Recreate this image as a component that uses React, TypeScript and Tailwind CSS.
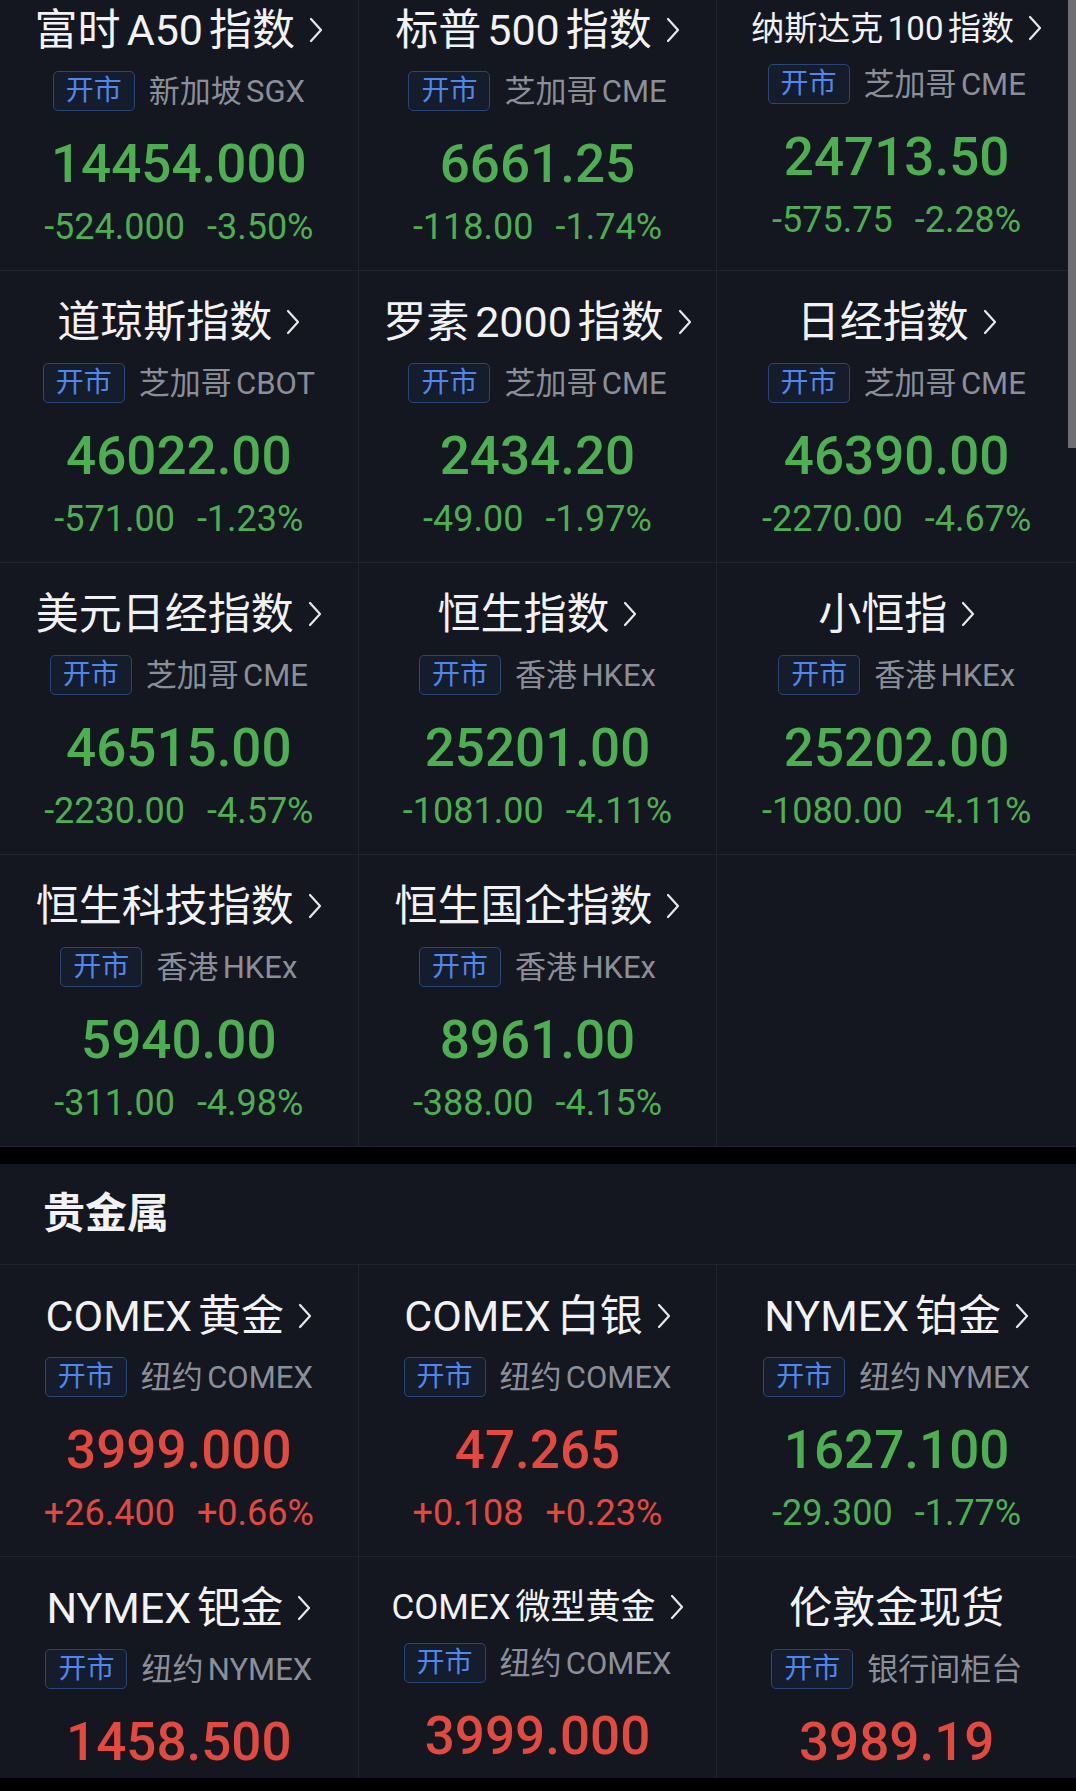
import React from "react";

type Item = {
  title: string;
  ex: string;
  price: string;
  chg?: string;
  pct?: string;
  up?: boolean;
  small?: number;
  noArrow?: boolean;
};

const FONT = { fontFamily: 'Roboto, "Noto Sans CJK SC", sans-serif' };

const indices: (Item | null)[] = [
  { title: "富时A50指数", ex: "新加坡SGX", price: "14454.000", chg: "-524.000", pct: "-3.50%" },
  { title: "标普500指数", ex: "芝加哥CME", price: "6661.25", chg: "-118.00", pct: "-1.74%" },
  { title: "纳斯达克100指数", ex: "芝加哥CME", price: "24713.50", chg: "-575.75", pct: "-2.28%", small: 1 },
  { title: "道琼斯指数", ex: "芝加哥CBOT", price: "46022.00", chg: "-571.00", pct: "-1.23%" },
  { title: "罗素2000指数", ex: "芝加哥CME", price: "2434.20", chg: "-49.00", pct: "-1.97%" },
  { title: "日经指数", ex: "芝加哥CME", price: "46390.00", chg: "-2270.00", pct: "-4.67%" },
  { title: "美元日经指数", ex: "芝加哥CME", price: "46515.00", chg: "-2230.00", pct: "-4.57%" },
  { title: "恒生指数", ex: "香港HKEx", price: "25201.00", chg: "-1081.00", pct: "-4.11%" },
  { title: "小恒指", ex: "香港HKEx", price: "25202.00", chg: "-1080.00", pct: "-4.11%" },
  { title: "恒生科技指数", ex: "香港HKEx", price: "5940.00", chg: "-311.00", pct: "-4.98%" },
  { title: "恒生国企指数", ex: "香港HKEx", price: "8961.00", chg: "-388.00", pct: "-4.15%" },
  null,
];

const metals: Item[] = [
  { title: "COMEX黄金", ex: "纽约COMEX", price: "3999.000", chg: "+26.400", pct: "+0.66%", up: true },
  { title: "COMEX白银", ex: "纽约COMEX", price: "47.265", chg: "+0.108", pct: "+0.23%", up: true },
  { title: "NYMEX铂金", ex: "纽约NYMEX", price: "1627.100", chg: "-29.300", pct: "-1.77%" },
  { title: "NYMEX钯金", ex: "纽约NYMEX", price: "1458.500", up: true },
  { title: "COMEX微型黄金", ex: "纽约COMEX", price: "3999.000", up: true, small: 2 },
  { title: "伦敦金现货", ex: "银行间柜台", price: "3989.19", up: true, noArrow: true },
];

const CJK = /[\u3400-\u9fff]/;

function Spaced({ text }: { text: string }) {
  const runs: { s: string; cjk: boolean }[] = [];
  for (const ch of text) {
    const c = CJK.test(ch);
    const last = runs[runs.length - 1];
    if (last && last.cjk === c) last.s += ch;
    else runs.push({ s: ch, cjk: c });
  }
  return (
    <span className="inline-flex items-center">
      {runs.map((r, i) => (
        <span key={i} className={i > 0 ? "ml-[0.14em]" : ""}>
          {r.s}
        </span>
      ))}
    </span>
  );
}

function Chevron() {
  return (
    <svg width="15" height="28" viewBox="0 0 15 28" className="ml-[13px] shrink-0">
      <polyline points="3,3 13,14 3,25" fill="none" stroke="#e8e8ea" strokeWidth="2.2" strokeLinecap="round" strokeLinejoin="round" />
    </svg>
  );
}

function Cell({ item, col }: { item: Item | null; col: number }) {
  const border = col < 2 ? "border-r border-b border-[#20242d]" : "border-b border-[#20242d]";
  if (!item) return <div className={`h-[292px] ${border}`} />;
  const color = item.up ? "text-[#e2493f]" : "text-[#4daf52]";
  const titleCls =
    item.small === 1
      ? "h-[40px] mt-[29px] text-[33px]"
      : item.small === 2
      ? "h-[40px] mt-[30px] text-[35px]"
      : "h-[48px] mt-[27px] text-[43px]";
  const afterSmall = item.small ? "mt-[16px]" : "mt-[17px]";
  return (
    <div className={`h-[292px] flex flex-col items-center ${border}`}>
      <div className={`flex items-center text-[#f2f2f4] leading-none whitespace-nowrap ${titleCls}`}>
        <Spaced text={item.title} />
        {!item.noArrow && <Chevron />}
      </div>
      <div className={`flex items-center h-[40px] ${afterSmall}`}>
        <span className="h-[40px] px-[12px] flex items-center rounded-[5px] border border-[#2a4678] bg-[#151c2b] text-[#4f87ef] text-[28px] leading-none">
          开市
        </span>
        <span className="ml-[14px] text-[31px] text-[#8a8f99] leading-none whitespace-nowrap">
          <Spaced text={item.ex} />
        </span>
      </div>
      <div className={`mt-[23px] h-[60px] flex items-center text-[53px] font-medium leading-none ${color}`}>
        {item.price}
      </div>
      {item.chg && (
        <div className={`mt-[13px] h-[40px] flex items-center gap-[22px] text-[36px] leading-none ${color}`}>
          <span>{item.chg}</span>
          <span>{item.pct}</span>
        </div>
      )}
    </div>
  );
}

export default function App() {
  return (
    <div className="relative h-[1791px] w-[1076px] overflow-hidden bg-black" style={FONT}>
      <div className="bg-[#141720] -mt-[21px] grid grid-cols-3">
        {indices.map((it, i) => (
          <Cell key={i} item={it} col={i % 3} />
        ))}
      </div>
      <div className="mt-[17px] h-[614px] overflow-hidden bg-[#141720]">
        <div className="h-[101px] flex items-center pl-[43px] border-b border-[#20242d] text-[42px] font-bold text-[#f2f2f4] leading-none">
          贵金属
        </div>
        <div className="grid grid-cols-3">
          {metals.map((it, i) => (
            <Cell key={i} item={it} col={i % 3} />
          ))}
        </div>
      </div>
      <div className="absolute right-0 top-0 w-[8px] h-[448px] bg-[#6e6e73]" />
    </div>
  );
}
